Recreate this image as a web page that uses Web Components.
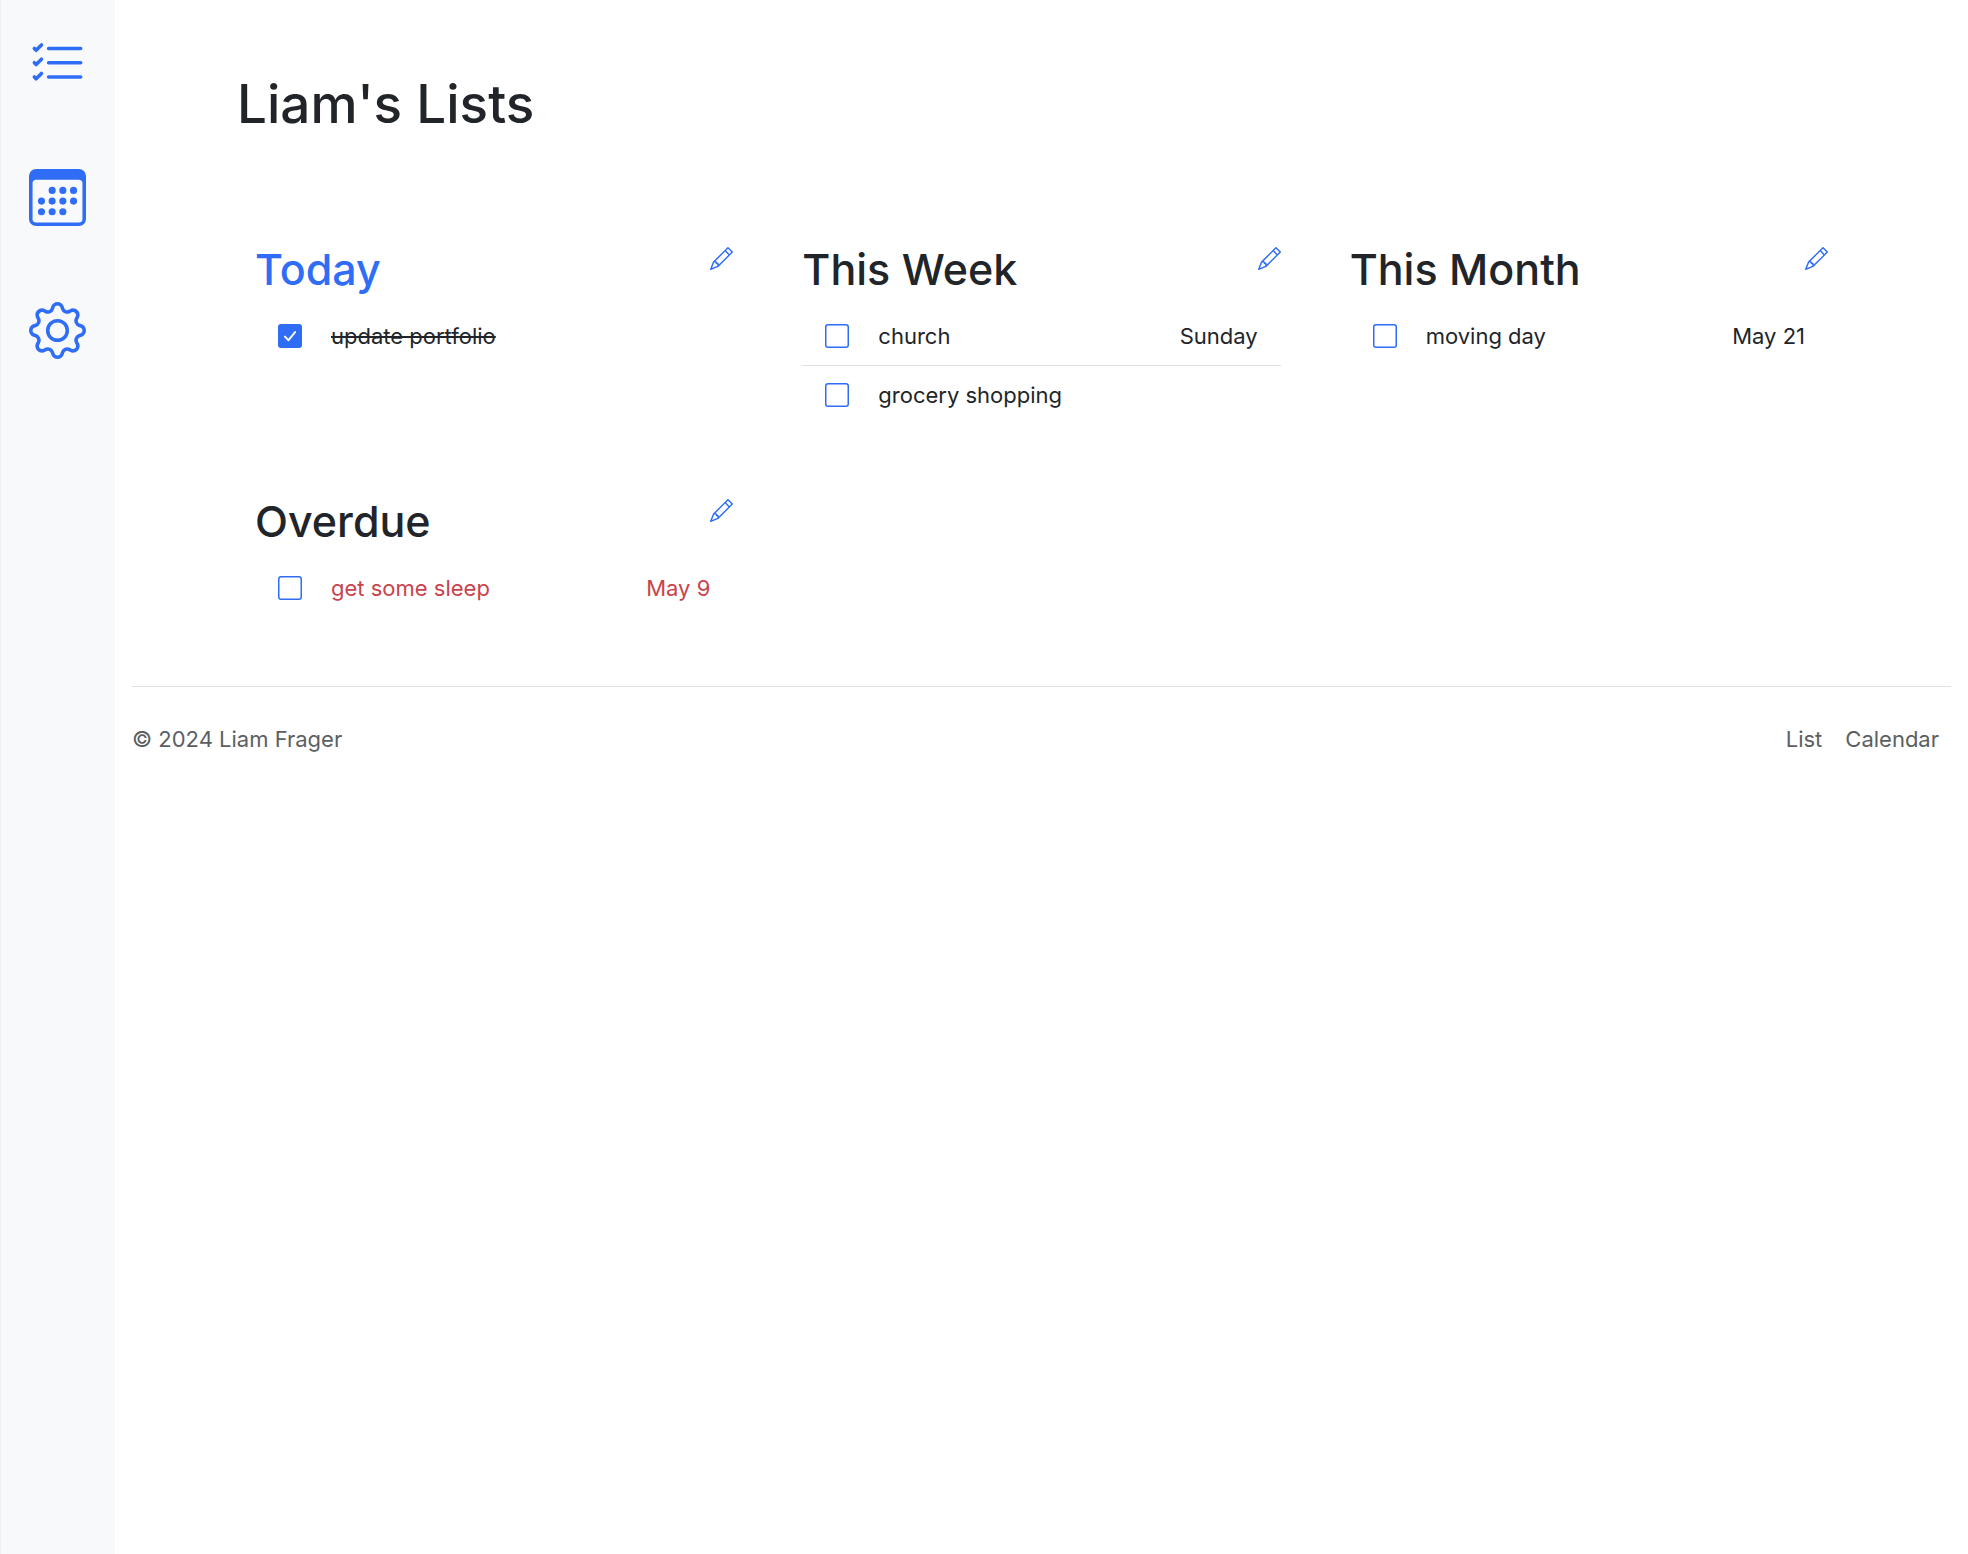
<!DOCTYPE html>
<html lang="en">
<head>
<meta charset="utf-8">
<meta name="viewport" content="width=device-width, initial-scale=1">
<title>Liam's Lists</title>
<style>
  html { height: 100%; }
  body {
    margin: 0;
    min-height: 100%;
    display: flex;
    background: #fff;
    color: #212529;
    font: 400 22px/35px Inter, "Liberation Sans", sans-serif;
    --blue: #2f6df6;
    --red: #c9434b;
    --rule: #dee2e6;
    --muted: #5c5f62;
  }
  main { flex: 1; min-width: 0; }
</style>
</head>
<body>
<side-nav></side-nav>
<main>
  <list-board>
    <span slot="title">Liam's Lists</span>
    <todo-list name="Today" current>
      <todo-item done>update portfolio</todo-item>
    </todo-list>
    <todo-list name="This Week">
      <todo-item due="Sunday">church</todo-item>
      <todo-item>grocery shopping</todo-item>
    </todo-list>
    <todo-list name="This Month">
      <todo-item due="May 21">moving day</todo-item>
    </todo-list>
    <todo-list name="Overdue">
      <todo-item due="May 9" late>get some sleep</todo-item>
    </todo-list>
  </list-board>
  <page-footer>© 2024 Liam Frager</page-footer>
</main>
<script>
const ICONS = {
  list: '<path fill-rule="evenodd" d="M5 11.5a.5.5 0 0 1 .5-.5h9a.5.5 0 0 1 0 1h-9a.5.5 0 0 1-.5-.5m0-4a.5.5 0 0 1 .5-.5h9a.5.5 0 0 1 0 1h-9a.5.5 0 0 1-.5-.5m0-4a.5.5 0 0 1 .5-.5h9a.5.5 0 0 1 0 1h-9a.5.5 0 0 1-.5-.5M3.854 2.146a.5.5 0 0 1 0 .708l-1.5 1.5a.5.5 0 0 1-.708 0l-.5-.5a.5.5 0 1 1 .708-.708L2 3.293l1.146-1.147a.5.5 0 0 1 .708 0m0 4a.5.5 0 0 1 0 .708l-1.5 1.5a.5.5 0 0 1-.708 0l-.5-.5a.5.5 0 1 1 .708-.708L2 7.293l1.146-1.147a.5.5 0 0 1 .708 0m0 4a.5.5 0 0 1 0 .708l-1.5 1.5a.5.5 0 0 1-.708 0l-.5-.5a.5.5 0 0 1 .708-.708l.146.147 1.146-1.147a.5.5 0 0 1 .708 0"/>',
  calendar: '<path d="M14 0H2a2 2 0 0 0-2 2v12a2 2 0 0 0 2 2h12a2 2 0 0 0 2-2V2a2 2 0 0 0-2-2M1 3.857C1 3.384 1.448 3 2 3h12c.552 0 1 .384 1 .857v10.286c0 .473-.448.857-1 .857H2c-.552 0-1-.384-1-.857z"/><path d="M6.5 7a1 1 0 1 0 0-2 1 1 0 0 0 0 2m3 0a1 1 0 1 0 0-2 1 1 0 0 0 0 2m3 0a1 1 0 1 0 0-2 1 1 0 0 0 0 2m-9 3a1 1 0 1 0 0-2 1 1 0 0 0 0 2m3 0a1 1 0 1 0 0-2 1 1 0 0 0 0 2m3 0a1 1 0 1 0 0-2 1 1 0 0 0 0 2m3 0a1 1 0 1 0 0-2 1 1 0 0 0 0 2m-9 3a1 1 0 1 0 0-2 1 1 0 0 0 0 2m3 0a1 1 0 1 0 0-2 1 1 0 0 0 0 2m3 0a1 1 0 1 0 0-2 1 1 0 0 0 0 2"/>',
  gear: '<path d="M8 4.754a3.246 3.246 0 1 0 0 6.492 3.246 3.246 0 0 0 0-6.492M5.754 8a2.246 2.246 0 1 1 4.492 0 2.246 2.246 0 0 1-4.492 0"/><path d="M9.796 1.343c-.527-1.79-3.065-1.79-3.592 0l-.094.319a.873.873 0 0 1-1.255.52l-.292-.16c-1.64-.892-3.433.902-2.54 2.541l.159.292a.873.873 0 0 1-.52 1.255l-.319.094c-1.79.527-1.79 3.065 0 3.592l.319.094a.873.873 0 0 1 .52 1.255l-.16.292c-.892 1.64.901 3.434 2.541 2.54l.292-.159a.873.873 0 0 1 1.255.52l.094.319c.527 1.79 3.065 1.79 3.592 0l.094-.319a.873.873 0 0 1 1.255-.52l.292.16c1.64.893 3.434-.902 2.54-2.541l-.159-.292a.873.873 0 0 1 .52-1.255l.319-.094c1.79-.527 1.79-3.065 0-3.592l-.319-.094a.873.873 0 0 1-.52-1.255l.16-.292c.893-1.64-.902-3.433-2.541-2.54l-.292.159a.873.873 0 0 1-1.255-.52zm-2.633.283c.246-.835 1.428-.835 1.674 0l.094.319a1.873 1.873 0 0 0 2.693 1.115l.291-.16c.764-.415 1.6.42 1.184 1.185l-.159.292a1.873 1.873 0 0 0 1.116 2.692l.318.094c.835.246.835 1.428 0 1.674l-.319.094a1.873 1.873 0 0 0-1.115 2.693l.16.291c.415.764-.42 1.6-1.185 1.184l-.291-.159a1.873 1.873 0 0 0-2.693 1.116l-.094.318c-.246.835-1.428.835-1.674 0l-.094-.319a1.873 1.873 0 0 0-2.692-1.115l-.292.16c-.764.415-1.6-.42-1.184-1.185l.159-.291A1.873 1.873 0 0 0 1.945 8.93l-.319-.094c-.835-.246-.835-1.428 0-1.674l.319-.094A1.873 1.873 0 0 0 3.06 4.377l-.16-.292c-.415-.764.42-1.6 1.185-1.184l.292.159a1.873 1.873 0 0 0 2.692-1.115z"/>',
  pencil: '<path d="M12.146.146a.5.5 0 0 1 .708 0l3 3a.5.5 0 0 1 0 .708l-10 10a.5.5 0 0 1-.168.11l-5 2a.5.5 0 0 1-.65-.65l2-5a.5.5 0 0 1 .11-.168zM11.207 2.5 13.5 4.793 14.793 3.5 12.5 1.207zm1.586 3L10.5 3.207 4 9.707V10h.5a.5.5 0 0 1 .5.5v.5h.5a.5.5 0 0 1 .5.5v.5h.293zm-9.761 5.175-.106.106-1.528 3.821 3.821-1.528.106-.106A.5.5 0 0 1 5 12.5V12h-.5a.5.5 0 0 1-.5-.5V11h-.5a.5.5 0 0 1-.468-.325"/>'
};
const icon = name => `<svg viewBox="0 0 16 16" fill="currentColor" aria-hidden="true">${ICONS[name]}</svg>`;

class BaseElement extends HTMLElement {
  connectedCallback() {
    if (this.shadowRoot) return;
    this.attachShadow({ mode: 'open' }).innerHTML = this.render();
  }
}

customElements.define('side-nav', class extends BaseElement {
  render() {
    return `<style>
      :host { display: block; flex: none; width: 115px;
        background: #f8f9fb; box-shadow: inset 1px 0 #edeff1; }
      nav { display: flex; flex-direction: column; align-items: center; gap: 76px; padding-top: 36px; }
      a { display: block; color: var(--blue); }
      svg { display: block; width: 57px; height: 57px; }
    </style>
    <nav aria-label="Main">
      <a href="#list" aria-label="Lists">${icon('list')}</a>
      <a href="#calendar" aria-label="Calendar">${icon('calendar')}</a>
      <a href="#settings" aria-label="Settings">${icon('gear')}</a>
    </nav>`;
  }
});

customElements.define('list-board', class extends BaseElement {
  render() {
    return `<style>
      :host { display: block; padding: 70px 140px 69px; }
      h1 { margin: 0 0 103px -18px; font-size: 53px; line-height: 69px; font-weight: 500; }
      .grid { display: grid; grid-template-columns: repeat(3, minmax(0, 1fr)); gap: 70px 69px; }
    </style>
    <h1><slot name="title"></slot></h1>
    <div class="grid"><slot></slot></div>`;
  }
});

customElements.define('todo-list', class extends BaseElement {
  render() {
    return `<style>
      :host { display: block; }
      header { display: flex; justify-content: space-between; align-items: flex-start; margin-bottom: 10px; }
      h2 { margin: 0; font-size: 43px; line-height: 55px; font-weight: 500; }
      :host([current]) h2 { color: var(--blue); }
      button { margin: 5px 0 0; padding: 0; border: 0; background: none; color: var(--blue); cursor: pointer; }
      svg { display: block; width: 23px; height: 23px; }
      ::slotted(todo-item:not(:last-child)) { border-bottom: 1px solid var(--rule); }
    </style>
    <header>
      <h2>${this.getAttribute('name')}</h2>
      <button type="button" aria-label="Edit">${icon('pencil')}</button>
    </header>
    <div role="list"><slot></slot></div>`;
  }
});

customElements.define('todo-item', class extends BaseElement {
  render() {
    const due = this.getAttribute('due');
    return `<style>
      :host { display: flex; align-items: center; height: 58px; padding: 0 23px; }
      :host([late]) { color: var(--red); }
      :host([done]) .text { text-decoration: line-through; }
      .box { display: grid; flex: none; margin-right: 29px; }
      input, svg { grid-area: 1 / 1; width: 24px; height: 24px; margin: 0; }
      input { appearance: none; }
      svg { pointer-events: none; color: var(--blue); }
      .tick { visibility: hidden; }
      input:checked + svg .frame { fill: currentColor; }
      input:checked + svg .tick { visibility: visible; }
      .text { flex: 1; }
    </style>
    <span class="box">
      <input type="checkbox" id="c" ${this.hasAttribute('done') ? 'checked' : ''}>
      <svg viewBox="0 0 16 16" fill="none" aria-hidden="true">
        <rect class="frame" x=".5" y=".5" width="15" height="15" rx="1.500" stroke="currentColor"/>
        <path class="tick" d="M4.600 8.400l2.400 2.400 4.400-5.400" stroke="#fff" stroke-width="1.300" stroke-linecap="round" stroke-linejoin="round"/>
      </svg>
    </span>
    <label class="text" for="c"><slot></slot></label>
    ${due ? `<span>${due}</span>` : ''}`;
  }
});

customElements.define('page-footer', class extends BaseElement {
  render() {
    return `<style>
      :host { display: block; margin: 0 17px; border-top: 1px solid var(--rule); color: var(--muted); }
      footer { display: flex; justify-content: space-between; padding: 35px 0; }
      nav { display: flex; gap: 23px; padding-right: 12px; }
      a { color: inherit; text-decoration: none; }
    </style>
    <footer>
      <span><slot></slot></span>
      <nav aria-label="Footer"><a href="#list">List</a><a href="#calendar">Calendar</a></nav>
    </footer>`;
  }
});
</script>
</body>
</html>
